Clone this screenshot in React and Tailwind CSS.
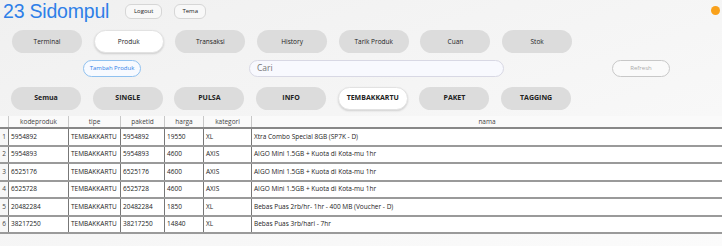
import React from "react";

const nav = ["Terminal", "Produk", "Transaksi", "History", "Tarik Produk", "Cuan", "Stok"];
const cats = ["Semua", "SINGLE", "PULSA", "INFO", "TEMBAKKARTU", "PAKET", "TAGGING"];
const rows = [
  ["5954892", "TEMBAKKARTU", "5954892", "19550", "XL", "Xtra Combo Special 8GB (SP7K - D)"],
  ["5954893", "TEMBAKKARTU", "5954893", "4600", "AXIS", "AIGO Mini 1.5GB + Kuota di Kota-mu 1hr"],
  ["6525176", "TEMBAKKARTU", "6525176", "4600", "AXIS", "AIGO Mini 1.5GB + Kuota di Kota-mu 1hr"],
  ["6525728", "TEMBAKKARTU", "6525728", "4600", "AXIS", "AIGO Mini 1.5GB + Kuota di Kota-mu 1hr"],
  ["20482284", "TEMBAKKARTU", "20482284", "1850", "XL", "Bebas Puas 2rb/hr- 1hr - 400 MB (Voucher - D)"],
  ["38217250", "TEMBAKKARTU", "38217250", "14840", "XL", "Bebas Puas 3rb/hari - 7hr"],
];
const cols = [
  { k: "kodeproduk", w: "w-[60px]" },
  { k: "tipe", w: "w-[52px]" },
  { k: "paketid", w: "w-[44px]" },
  { k: "harga", w: "w-[39px]" },
  { k: "kategori", w: "w-[48px]" },
  { k: "nama", w: "flex-1" },
];

export default function App() {
  return (
    <div
      className="w-[722px] h-[246px] overflow-hidden bg-gradient-to-br from-[#f0f0f0] to-[#fbfbfb] relative text-[#222]"
      style={{ fontFamily: '"Open Sans", "Noto Sans", sans-serif' }}
    >
      <div className="absolute right-[2px] top-[6px] w-[9px] h-[9px] rounded-full bg-[#f9a11b]" />
      {/* header */}
      <div className="flex items-center h-[22px] pt-[1px]">
        <div className="ml-[3px] text-[19.5px] leading-none text-[#2e7fe8] tracking-[-0.2px]" style={{ fontFamily: '"Liberation Sans", sans-serif' }}>
          23 Sidompul
        </div>
        <div className="ml-[16px] w-[37px] h-[15px] rounded-[6px] border border-[#d6d6d6] bg-[#f8f8f8] flex items-center justify-center text-[6px]">Logout</div>
        <div className="ml-[12px] w-[32px] h-[15px] rounded-[6px] border border-[#d6d6d6] bg-[#f8f8f8] flex items-center justify-center text-[6px]">Tema</div>
      </div>
      {/* nav */}
      <div className="flex gap-[11.7px] ml-[12px] mt-[8px]">
        {nav.map((n) => (
          <div
            key={n}
            className={
              n === "Produk"
                ? "w-[70px] h-[23px] rounded-full bg-white border border-[#e2e2e2] shadow-[0_1px_2px_rgba(0,0,0,0.15)] flex items-center justify-center text-[6.5px]"
                : "w-[70px] h-[23px] rounded-full bg-[#dcdcdc] flex items-center justify-center text-[6.5px]"
            }
          >
            {n}
          </div>
        ))}
      </div>
      {/* row 2 */}
      <div className="flex items-center mt-[6px] h-[18px]">
        <div className="ml-[83px] w-[58px] h-[17px] rounded-full border border-[#8fc1f0] bg-[#f7faff] flex items-center justify-center text-[6px] text-[#2e7fe8]">Tambah Produk</div>
        <div className="ml-[108px] w-[255px] h-[17px] rounded-full border border-[#d8d8e4] bg-[#f8f9fe] flex items-center pl-[7px] text-[8.5px] text-[#777]">Cari</div>
        <div className="ml-[108px] w-[58px] h-[17px] rounded-full border border-[#c8c8c8] bg-[#fafafa] flex items-center justify-center text-[6px] text-[#aaa]">Refresh</div>
      </div>
      {/* categories */}
      <div className="flex gap-[11.7px] ml-[11px] mt-[10px]">
        {cats.map((n) => (
          <div
            key={n}
            className={
              n === "TEMBAKKARTU"
                ? "w-[70px] h-[23px] rounded-full bg-white border border-[#e2e2e2] shadow-[0_1px_2px_rgba(0,0,0,0.15)] flex items-center justify-center text-[7px] font-bold"
                : "w-[70px] h-[23px] rounded-full bg-[#dcdcdc] flex items-center justify-center text-[7px] font-bold"
            }
          >
            {n}
          </div>
        ))}
      </div>
      {/* table */}
      <div className="mt-[6px] text-[6.5px]">
        <div className="flex h-[13px] bg-[#fafafa] border-b-[2px] border-[#888]">
          <div className="w-[8px]" />
          {cols.map((c) => (
            <div key={c.k} className={`${c.w} border-l border-[#c8c8c8] flex items-center justify-center text-[#444]`}>
              {c.k}
            </div>
          ))}
        </div>
        {rows.map((r, i) => (
          <div key={i} className="flex h-[17.5px] bg-white border-b-[2px] border-[#9a9a9a]">
            <div className="w-[8px] flex items-center justify-center text-[#444] bg-[#f7f7f7]">{i + 1}</div>
            {r.map((v, j) => (
              <div key={j} className={`${cols[j].w} border-l-[1.5px] border-[#777] flex items-center pl-[2px] text-[#222] whitespace-nowrap overflow-hidden`}>
                {v}
              </div>
            ))}
          </div>
        ))}
      </div>
    </div>
  );
}
